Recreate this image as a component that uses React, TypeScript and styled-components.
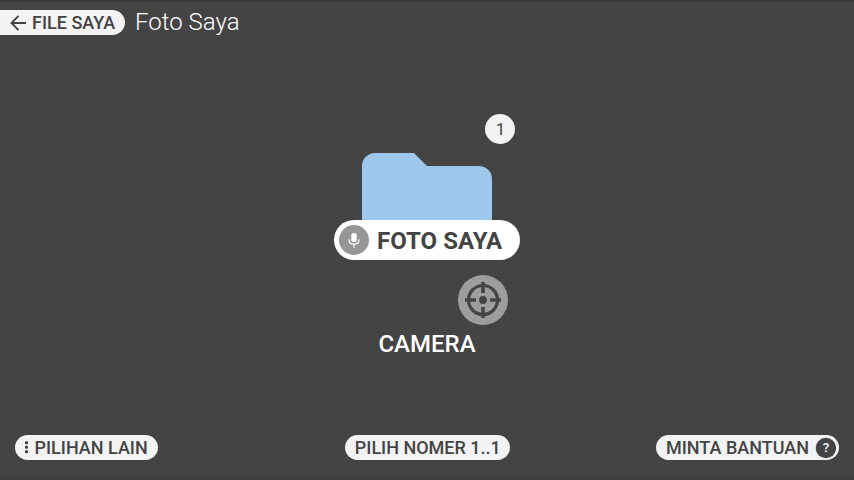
import React from 'react';
import styled, { createGlobalStyle } from 'styled-components';

const GlobalStyle = createGlobalStyle`
  *, *::before, *::after { box-sizing: border-box; }
  body { margin: 0; background: #444; }
`;

const Screen = styled.div`
  width: 854px;
  height: 480px;
  display: flex;
  flex-direction: column;
  overflow: hidden;
  background: linear-gradient(#353535, #3c3c3c 1px, #444 3px, #444 476px, #413e40 478px, #443b40 480px);
  padding: 1px 0 3px;
  font-family: Roboto, sans-serif;
  color: #fff;
`;

const Header = styled.header`
  display: flex;
  align-items: center;
  height: 43px;
  flex: none;
`;

const Pill = styled.button<{ $width: number; $edge?: boolean; $inset?: number }>`
  display: flex;
  align-items: center;
  width: ${p => p.$width}px;
  height: 25px;
  padding: 0 0 0 ${p => p.$inset ?? 10}px;
  border: 0;
  border-radius: ${p => (p.$edge ? '0 12.5px 12.5px 0' : '12.5px')};
  background: #f3f3f3;
  color: #444;
  font: 500 18px/25px Roboto, sans-serif;
  white-space: nowrap;
`;

const Title = styled.h1`
  margin: -2px 0 0 10px;
  font-size: 24px;
  font-weight: 300;
  line-height: 28px;
`;

const Main = styled.main`
  display: flex;
  flex-direction: column;
  align-items: center;
  flex: 1;
`;

const Badge = styled.span`
  display: grid;
  place-items: center;
  width: 30px;
  height: 30px;
  margin: 69.5px 0 9.5px 146px;
  border-radius: 50%;
  background: #f3f3f3;
  color: #444;
  font-size: 17px;
  padding-left: 1px;
`;

const Folder = styled.svg`
  display: block;
  flex: none;
`;

const Current = styled.div`
  display: flex;
  align-items: center;
  flex: none;
  width: 186px;
  height: 40px;
  padding-left: 5px;
  gap: 8px;
  border-radius: 20px;
  background: #fff;
  color: #444;
  font-size: 24px;
  font-weight: 700;
`;

const Name = styled.span`
  padding-top: 2px;
  letter-spacing: 0.04px;
`;

const Target = styled.svg`
  flex: none;
  margin: 15px 0 0 112px;
`;

const Caption = styled.div`
  margin-top: 5px;
  font-size: 24px;
  font-weight: 500;
  line-height: 28px;
`;

const Footer = styled.footer`
  display: grid;
  grid-template-columns: 1fr 165px 1fr;
  flex: none;
  height: 42px;
  padding: 0 15px;

  > :last-child { justify-self: end; }
`;

const Icon = styled.svg`
  flex: none;
`;

export default function App() {
  return (
    <>
      <GlobalStyle />
      <Screen>
        <Header>
          <Pill $width={125} $edge>
            <Icon width="22" height="18" viewBox="0 0 22 18" fill="none" stroke="#444" strokeWidth="1.9">
              <path d="M16 9H1.5M8.5 1.8L1.5 9l7 7.2" />
            </Icon>
            FILE SAYA
          </Pill>
          <Title>Foto Saya</Title>
        </Header>
        <Main>
          <Badge>1</Badge>
          <Folder width="130" height="67" viewBox="0 0 130 67">
            <path d="M0 67V13A13 13 0 0 1 13 0H52L65 13H117A13 13 0 0 1 130 26V67Z" fill="#9dc8eb" />
          </Folder>
          <Current>
            <Icon width="30" height="30" viewBox="0 0 30 30">
              <circle cx="15" cy="15" r="15" fill="#969696" />
              <rect x="12.3" y="8" width="5.4" height="9" rx="2" fill="#fff" />
              <path d="M10 14.2c0 3.2 2.2 5 5 5s5-1.8 5-5M15 19v4" fill="none" stroke="#fff" strokeWidth="1.2" />
            </Icon>
            <Name>FOTO SAYA</Name>
          </Current>
          <Target width="50" height="50" viewBox="0 0 50 50">
            <circle cx="25" cy="25" r="25" fill="#9d9d9d" />
            <g fill="none" stroke="#444">
              <circle cx="25" cy="25" r="14.5" strokeWidth="3.2" />
              <path d="M25 7v11M25 32v11M7 25h11M32 25h11" strokeWidth="3.6" />
            </g>
            <circle cx="25" cy="25" r="3.9" fill="#444" />
          </Target>
          <Caption>CAMERA</Caption>
        </Main>
        <Footer>
          <Pill $width={143}>
            <Icon width="9.5" height="18" viewBox="0 0 9.5 18" fill="#444">
              <rect y="2.3" width="3" height="3" rx="0.8" />
              <rect y="6.8" width="3" height="3" rx="0.8" />
              <rect y="11.3" width="3" height="3" rx="0.8" />
            </Icon>
            PILIHAN LAIN
          </Pill>
          <Pill $width={165} $inset={10.3}>PILIH NOMER 1..1</Pill>
          <Pill $width={183}>
            MINTA BANTUAN
            <Icon width="27" height="22" viewBox="0 0 27 22">
              <circle cx="16.9" cy="11" r="10.2" fill="#444" />
              <text x="17" y="15.2" textAnchor="middle" fontSize="13.5" fontWeight="500" fill="#f3f3f3">?</text>
            </Icon>
          </Pill>
        </Footer>
      </Screen>
    </>
  );
}
